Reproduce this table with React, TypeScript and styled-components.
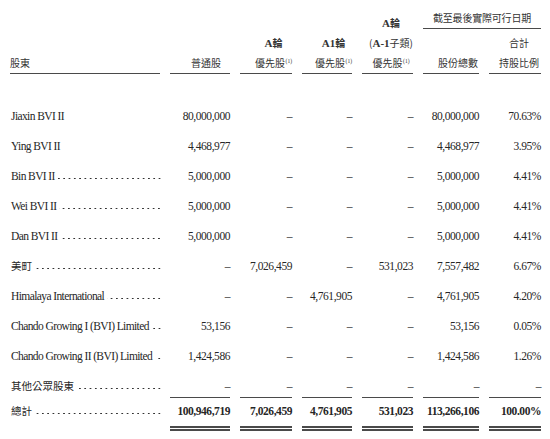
import React, { ReactElement } from 'react'
import styled, { createGlobalStyle } from 'styled-components'

const GlobalStyle = createGlobalStyle`
  body {
    margin: 0;
    background: #FFFFFF;
    color: #262626;
    font-family: 'Liberation Serif', 'Noto Sans CJK TC', serif;
  }
`

const columns = '150px 60px 52px 50px 51px 56px 52px'

const TableContainer = styled.section`
  padding: 8px 9px 0 10px;
  width: 531px;
`

const HeaderGrid = styled.div`
  display: grid;
  grid-template-columns: ${columns};
  grid-template-rows: auto auto;
  column-gap: 10px;
  row-gap: 4px;
  font-family: 'Noto Sans CJK TC', 'Liberation Serif', sans-serif;
  font-size: 10px;
  line-height: 20px;
  color: #333333;
`

const GroupTitle = styled.div`
  grid-column: 6 / 8;
  grid-row: 1;
  text-align: center;
  border-bottom: 1.5px solid #4A4A4A;
  letter-spacing: -0.2px;
`

const HeadCell = styled.div<{ $group?: boolean; $left?: boolean; $inset?: number }>`
  grid-row: ${props => props.$group ? '2' : '1 / 3'};
  display: flex;
  flex-direction: column;
  justify-content: flex-end;
  align-items: ${props => props.$left ? 'flex-start' : 'flex-end'};
  padding-right: ${props => props.$inset || 0}px;
  border-bottom: 1.5px solid #4A4A4A;
`

const HeadBlock = styled.div`
  text-align: center;
  white-space: nowrap;
`

const HeadLine = styled.div<{ $bold?: boolean }>`
  font-weight: ${props => props.$bold ? 700 : 400};
`

const Latin = styled.span`
  font-family: 'Liberation Serif', serif;
  font-weight: 700;
  font-size: 11px;
`

const Note = styled.sup`
  font-family: 'Liberation Serif', serif;
  font-size: 5.5px;
  line-height: 0;
  vertical-align: 4px;
  margin-left: 0.5px;
`

const Body = styled.div`
  display: flex;
  flex-direction: column;
  gap: 8px;
  margin-top: 31px;
`

const Row = styled.div<{ $total?: boolean }>`
  display: grid;
  grid-template-columns: ${columns};
  column-gap: 10px;
  font-size: 11.5px;
  line-height: 22px;
  letter-spacing: -0.45px;
  font-weight: ${props => props.$total ? 700 : 400};
  margin-top: ${props => props.$total ? '2px' : '0'};
`

const NameCell = styled.div`
  display: flex;
  align-items: baseline;
  min-width: 0;
  white-space: nowrap;
  padding-left: 1px;
`

const NameText = styled.span<{ $cjk?: boolean }>`
  font-family: ${props => props.$cjk
    ? "'Noto Sans CJK TC', sans-serif"
    : "'Liberation Serif', serif"};
  font-size: ${props => props.$cjk ? '10.5px' : '11.5px'};
  font-weight: 400;
  letter-spacing: ${props => props.$cjk ? '0' : '-0.6px'};
`

const Leader = styled.span<{ $tight?: boolean }>`
  flex: 1;
  min-width: 0;
  height: 4px;
  margin-left: ${props => props.$tight ? '0' : '3px'};
  margin-right: -2px;
  background-image: radial-gradient(circle at center, #333333 0.7px, transparent 1.05px);
  background-size: 5.3px 3px;
  background-repeat: repeat-x;
  background-position: right bottom;
`

const ValueCell = styled.div<{ $rule?: 'single' | 'double' }>`
  text-align: right;
  white-space: nowrap;
  border-bottom: ${props => props.$rule === 'single'
    ? '1.5px solid #4A4A4A'
    : props.$rule === 'double' ? '5px double #4A4A4A' : 'none'};
  padding-bottom: ${props => props.$rule === 'double' ? '3.5px' : '0'};
`

type Holder = {
  id: number
  name: string
  cjk?: boolean
  leader?: boolean
  tight?: boolean
  values: string[]
}

const holders: Holder[] = [
  { id: 1, name: 'Jiaxin BVI II', values: ['80,000,000', '–', '–', '–', '80,000,000', '70.63%'] },
  { id: 2, name: 'Ying BVI II', values: ['4,468,977', '–', '–', '–', '4,468,977', '3.95%'] },
  { id: 3, name: 'Bin BVI II', leader: true, tight: true, values: ['5,000,000', '–', '–', '–', '5,000,000', '4.41%'] },
  { id: 4, name: 'Wei BVI II', leader: true, values: ['5,000,000', '–', '–', '–', '5,000,000', '4.41%'] },
  { id: 5, name: 'Dan BVI II', leader: true, values: ['5,000,000', '–', '–', '–', '5,000,000', '4.41%'] },
  { id: 6, name: '美町', cjk: true, leader: true, values: ['–', '7,026,459', '–', '531,023', '7,557,482', '6.67%'] },
  { id: 7, name: 'Himalaya International', leader: true, values: ['–', '–', '4,761,905', '–', '4,761,905', '4.20%'] },
  { id: 8, name: 'Chando Growing I (BVI) Limited', leader: true, values: ['53,156', '–', '–', '–', '53,156', '0.05%'] },
  { id: 9, name: 'Chando Growing II (BVI) Limited', leader: true, values: ['1,424,586', '–', '–', '–', '1,424,586', '1.26%'] },
  { id: 10, name: '其他公眾股東', cjk: true, leader: true, values: ['–', '–', '–', '–', '–', '–'] },
]

const totals = ['100,946,719', '7,026,459', '4,761,905', '531,023', '113,266,106', '100.00%']

function App(): ReactElement {
  return (<>
    <GlobalStyle />
    <TableContainer>
      <HeaderGrid>
        <HeadCell $left style={{ gridColumn: 1 }}>
          <HeadBlock>股東</HeadBlock>
        </HeadCell>
        <HeadCell $inset={9} style={{ gridColumn: 2 }}>
          <HeadBlock>普通股</HeadBlock>
        </HeadCell>
        <HeadCell style={{ gridColumn: 3 }}>
          <HeadBlock>
            <HeadLine $bold><Latin>A</Latin>輪</HeadLine>
            <HeadLine>優先股<Note>(1)</Note></HeadLine>
          </HeadBlock>
        </HeadCell>
        <HeadCell style={{ gridColumn: 4 }}>
          <HeadBlock>
            <HeadLine $bold><Latin>A1</Latin>輪</HeadLine>
            <HeadLine>優先股<Note>(1)</Note></HeadLine>
          </HeadBlock>
        </HeadCell>
        <HeadCell style={{ gridColumn: 5 }}>
          <HeadBlock>
            <HeadLine $bold><Latin>A</Latin>輪</HeadLine>
            <HeadLine>(<Latin>A-1</Latin>子類)</HeadLine>
            <HeadLine>優先股<Note>(1)</Note></HeadLine>
          </HeadBlock>
        </HeadCell>
        <GroupTitle>截至最後實際可行日期</GroupTitle>
        <HeadCell $group $inset={1} style={{ gridColumn: 6 }}>
          <HeadBlock>股份總數</HeadBlock>
        </HeadCell>
        <HeadCell $group $inset={2} style={{ gridColumn: 7 }}>
          <HeadBlock>
            <HeadLine>合計</HeadLine>
            <HeadLine>持股比例</HeadLine>
          </HeadBlock>
        </HeadCell>
      </HeaderGrid>

      <Body>
        {holders.map((holder, index) => {
          const last = index === holders.length - 1
          return (<Row key={holder.id}>
            <NameCell>
              <NameText $cjk={holder.cjk}>{holder.name}</NameText>
              {holder.leader && <Leader $tight={holder.tight} />}
            </NameCell>
            {holder.values.map((value, i) => (
              <ValueCell key={i} $rule={last ? 'single' : undefined}>{value}</ValueCell>
            ))}
          </Row>)
        })}
      </Body>

      <Row $total>
        <NameCell>
          <NameText $cjk>總計</NameText>
          <Leader />
        </NameCell>
        {totals.map((value, i) => (
          <ValueCell key={i} $rule="double">{value}</ValueCell>
        ))}
      </Row>
    </TableContainer>
  </>)
}

export default App
